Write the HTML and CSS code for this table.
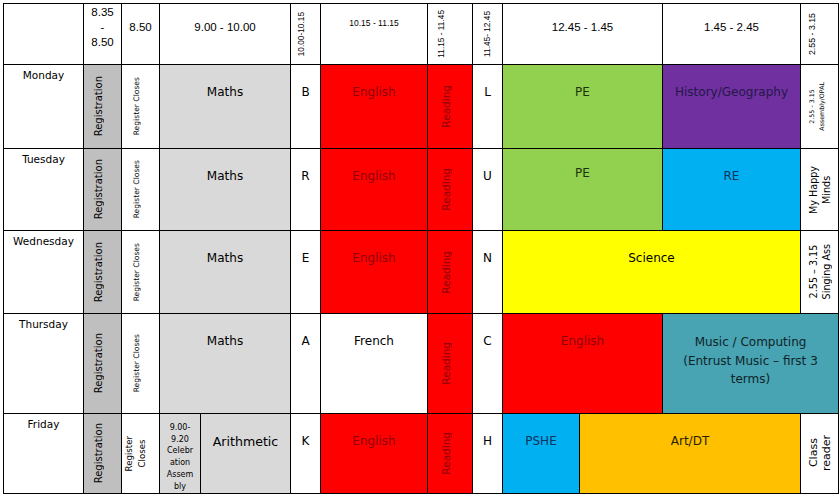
FILE: index.html
```html
<!DOCTYPE html>
<html lang="en">
<head>
<meta charset="utf-8">
<title>Class Timetable</title>
<link rel="stylesheet" href="styles.css">
</head>
<body>
<div class="timetable">
  <!-- header row -->
  <div class="cell"></div>
  <div class="cell hd hd-stack">8.35<br>-<br>8.50</div>
  <div class="cell hd">8.50</div>
  <div class="cell hd span2">9.00 - 10.00</div>
  <div class="cell rot pr9"><span class="vt hdv">10.00-10.15</span></div>
  <div class="cell hd hd-small">10.15 - 11.15</div>
  <div class="cell rot pr18"><span class="vt hdv">11.15 - 11.45</span></div>
  <div class="cell rot pr2"><span class="vt hdv">11.45- 12.45</span></div>
  <div class="cell hd span2">12.45 - 1.45</div>
  <div class="cell hd">1.45 - 2.45</div>
  <div class="cell rot pr16"><span class="vt hdv hdv-lg">2.55 - 3.15</span></div>

  <!-- Monday -->
  <div class="cell day">Monday</div>
  <div class="cell rot pr9 reg"><span class="vt regtxt">Registration</span></div>
  <div class="cell rot pr9"><span class="vt closes">Register Closes</span></div>
  <div class="cell subj grey span2">Maths</div>
  <div class="cell subj">B</div>
  <div class="cell subj red">English</div>
  <div class="cell rot pr9 red"><span class="vt reading">Reading</span></div>
  <div class="cell subj">L</div>
  <div class="cell subj green span2">PE</div>
  <div class="cell subj purple">History/Geography</div>
  <div class="cell rot pr6"><span class="vt tiny">2.55 - 3.15<br>Assembly/OPAL</span></div>

  <!-- Tuesday -->
  <div class="cell day">Tuesday</div>
  <div class="cell rot pr9 reg"><span class="vt regtxt">Registration</span></div>
  <div class="cell rot pr9"><span class="vt closes">Register Closes</span></div>
  <div class="cell subj grey span2">Maths</div>
  <div class="cell subj">R</div>
  <div class="cell subj red">English</div>
  <div class="cell rot pr9 red"><span class="vt reading">Reading</span></div>
  <div class="cell subj">U</div>
  <div class="cell subj subj-up green span2">PE</div>
  <div class="cell subj blue">RE</div>
  <div class="cell rot"><span class="vt side">My Happy<br>Minds</span></div>

  <!-- Wednesday -->
  <div class="cell day">Wednesday</div>
  <div class="cell rot pr9 reg"><span class="vt regtxt">Registration</span></div>
  <div class="cell rot pr9"><span class="vt closes">Register Closes</span></div>
  <div class="cell subj grey span2">Maths</div>
  <div class="cell subj">E</div>
  <div class="cell subj red">English</div>
  <div class="cell rot pr9 red"><span class="vt reading">Reading</span></div>
  <div class="cell subj">N</div>
  <div class="cell subj yellow span3">Science</div>
  <div class="cell rot"><span class="vt side">2.55 – 3.15<br>Singing Ass</span></div>

  <!-- Thursday -->
  <div class="cell day">Thursday</div>
  <div class="cell rot pr9 reg"><span class="vt regtxt">Registration</span></div>
  <div class="cell rot pr9"><span class="vt closes">Register Closes</span></div>
  <div class="cell subj grey span2">Maths</div>
  <div class="cell subj">A</div>
  <div class="cell subj">French</div>
  <div class="cell rot pr9 red"><span class="vt reading">Reading</span></div>
  <div class="cell subj">C</div>
  <div class="cell subj red span2">English</div>
  <div class="cell subj teal span2 music">Music / Computing<br>(Entrust Music – first 3<br>terms)</div>

  <!-- Friday -->
  <div class="cell day">Friday</div>
  <div class="cell rot pr9 reg"><span class="vt regtxt">Registration</span></div>
  <div class="cell rot pr9"><span class="vt closes closes-2">Register<br>Closes</span></div>
  <div class="cell grey assembly">9.00-<br>9.20<br>Celebr<br>ation<br>Assem<br>bly</div>
  <div class="cell subj grey arith">Arithmetic</div>
  <div class="cell subj">K</div>
  <div class="cell subj red">English</div>
  <div class="cell rot pr9 red"><span class="vt reading">Reading</span></div>
  <div class="cell subj">H</div>
  <div class="cell subj blue">PSHE</div>
  <div class="cell subj orange span2">Art/DT</div>
  <div class="cell rot"><span class="vt side side-lg">Class<br>reader</span></div>
</div>
</body>
</html>
```

FILE: styles.css
```css
html, body {
  margin: 0;
  padding: 0;
  background: #ffffff;
}

.timetable {
  display: grid;
  grid-template-columns: 79px 37px 37px 40px 89px 29px 106px 44px 29px 76px 82px 137px 37px;
  grid-template-rows: 60px 83px 81px 82px 99px 79px;
  gap: 1px;
  padding: 1px;
  margin: 3px;
  width: max-content;
  background: #000000;
  font-family: "DejaVu Sans", "Noto Sans", sans-serif;
  color: #000000;
}

.cell {
  background: #ffffff;
  text-align: center;
  overflow: hidden;
  box-sizing: border-box;
}

.span2 { grid-column: span 2; }
.span3 { grid-column: span 3; }

/* header */
.hd {
  font-family: "Liberation Sans", Arial, sans-serif;
  font-size: 11.5px;
  line-height: 15px;
  padding-top: 16px;
}
.hd-stack { padding-top: 1px; }
.hd-small {
  font-size: 8.5px;
  line-height: 12px;
  padding-top: 13px;
}

/* rotated text */
.rot {
  display: flex;
  align-items: center;
  justify-content: center;
}
.vt {
  writing-mode: vertical-rl;
  transform: rotate(180deg);
  text-align: center;
  white-space: nowrap;
}
.pr2 { padding-right: 2px; }
.pr6 { padding-right: 6px; }
.pr9 { padding-right: 9px; }
.pr16 { padding-right: 16px; }
.pr18 { padding-right: 18px; }

.hdv {
  font-family: "Liberation Sans", Arial, sans-serif;
  font-size: 8.3px;
}
.hdv-lg { font-size: 8.8px; }

.regtxt { font-size: 10px; }
.closes { font-size: 7.6px; }
.closes-2 { font-size: 8.6px; line-height: 13px; }
.reading { font-size: 10.5px; color: #8c0008; }
.tiny { font-size: 6.3px; line-height: 10px; }
.side { font-size: 9.6px; line-height: 13px; }
.side-lg { font-size: 11px; line-height: 13px; }

/* body cells */
.day {
  font-size: 10.5px;
  line-height: 14px;
  padding-top: 3px;
}
.subj {
  font-size: 12px;
  line-height: 16px;
  padding-top: 19px;
}
.subj-up { padding-top: 16px; }
.arith { font-size: 12.6px; padding-top: 20px; }
.music { line-height: 18.5px; }
.assembly {
  font-size: 8px;
  line-height: 11.7px;
  padding-top: 8px;
}

/* colours */
.reg { background: #bfbfbf; }
.grey { background: #d9d9d9; }
.red { background: #ff0000; color: #8c0008; }
.green { background: #92d050; color: #1c3410; }
.purple { background: #7030a0; color: #231848; }
.blue { background: #00b0f0; color: #16325c; }
.yellow { background: #ffff00; color: #000000; }
.teal { background: #48a3b3; color: #0f2329; }
.orange { background: #ffc000; color: #2a1e00; }
```
